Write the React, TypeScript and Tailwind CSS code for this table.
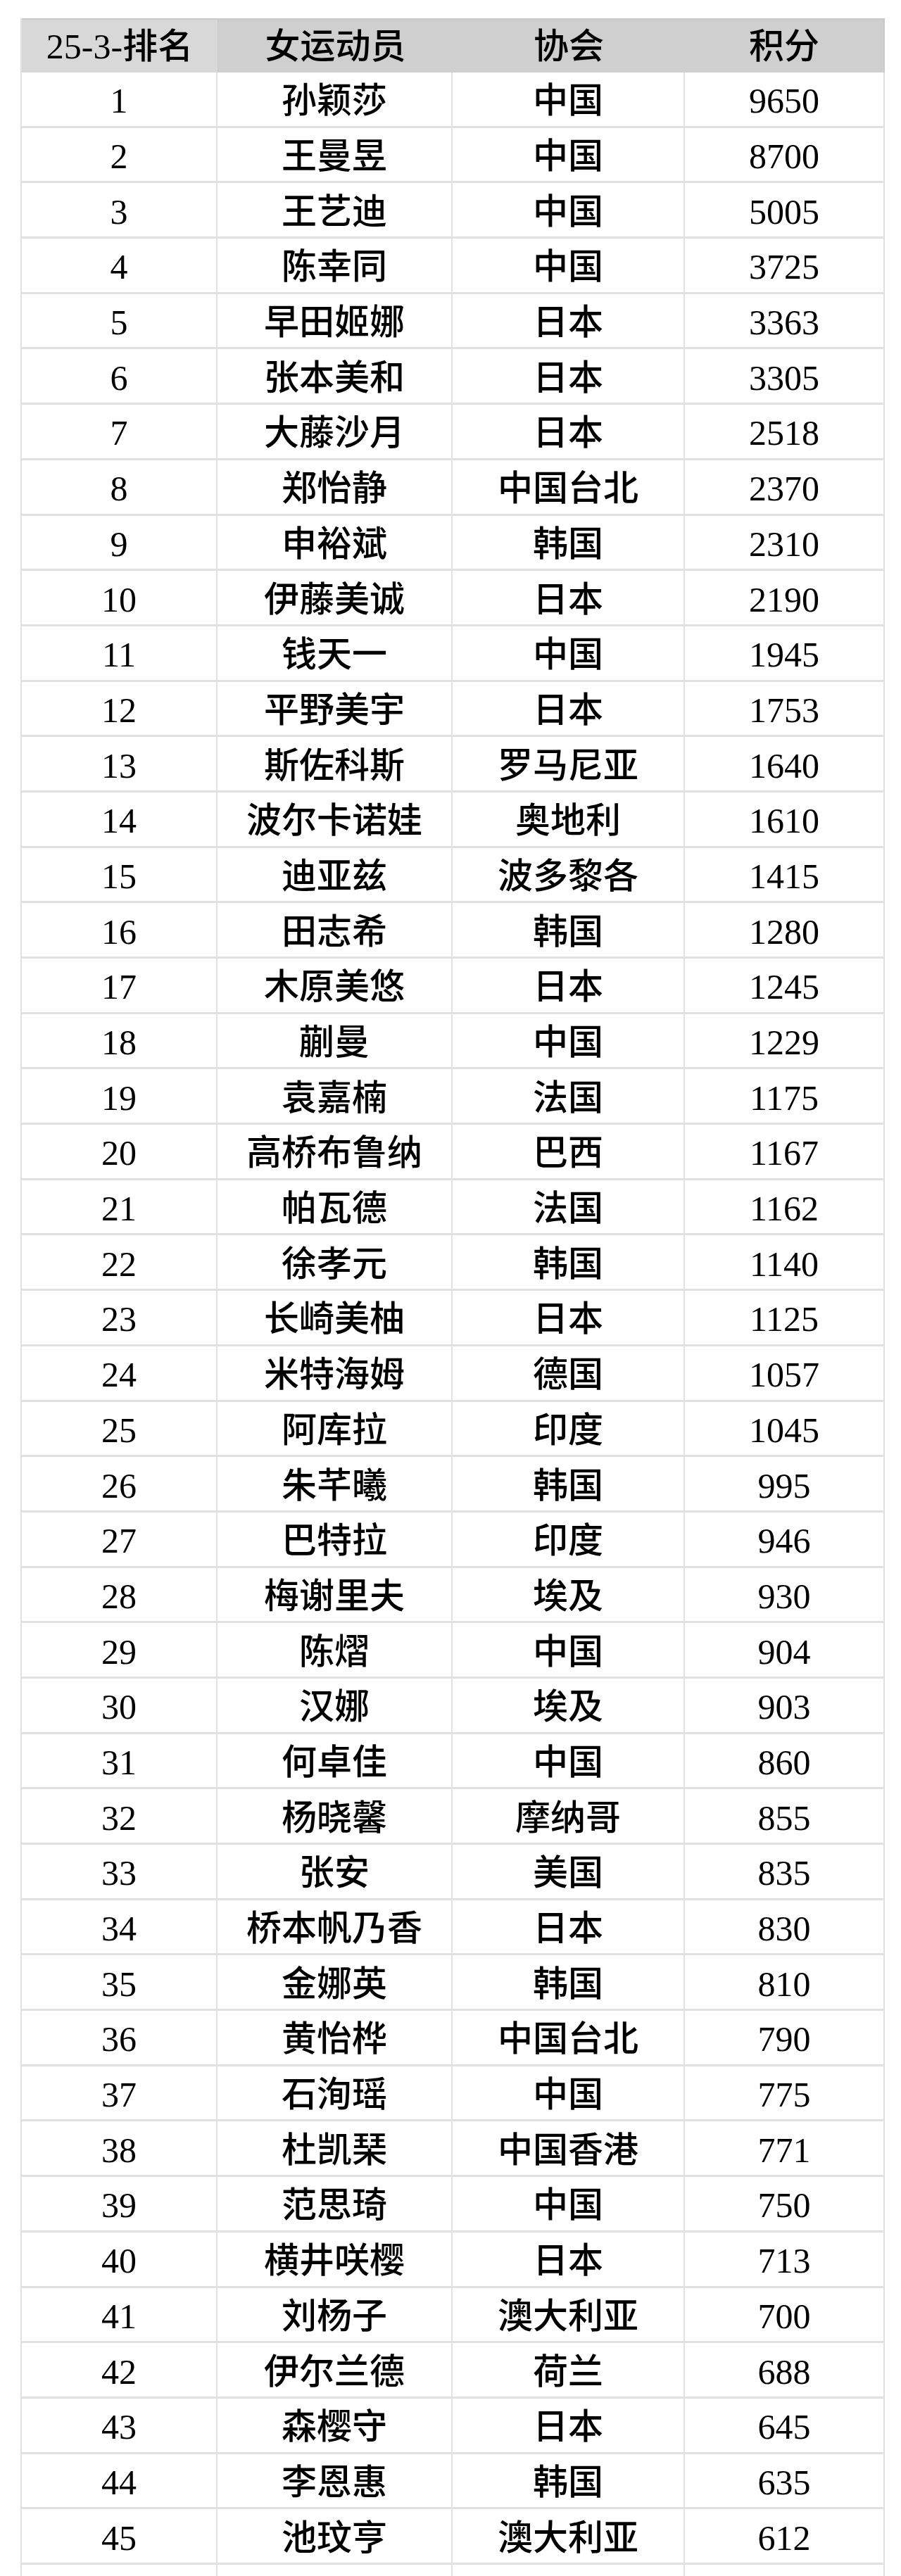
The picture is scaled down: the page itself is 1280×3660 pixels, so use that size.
const rows: [string, string, string][] = [
  ["孙颖莎", "中国", "9650"],
  ["王曼昱", "中国", "8700"],
  ["王艺迪", "中国", "5005"],
  ["陈幸同", "中国", "3725"],
  ["早田姬娜", "日本", "3363"],
  ["张本美和", "日本", "3305"],
  ["大藤沙月", "日本", "2518"],
  ["郑怡静", "中国台北", "2370"],
  ["申裕斌", "韩国", "2310"],
  ["伊藤美诚", "日本", "2190"],
  ["钱天一", "中国", "1945"],
  ["平野美宇", "日本", "1753"],
  ["斯佐科斯", "罗马尼亚", "1640"],
  ["波尔卡诺娃", "奥地利", "1610"],
  ["迪亚兹", "波多黎各", "1415"],
  ["田志希", "韩国", "1280"],
  ["木原美悠", "日本", "1245"],
  ["蒯曼", "中国", "1229"],
  ["袁嘉楠", "法国", "1175"],
  ["高桥布鲁纳", "巴西", "1167"],
  ["帕瓦德", "法国", "1162"],
  ["徐孝元", "韩国", "1140"],
  ["长崎美柚", "日本", "1125"],
  ["米特海姆", "德国", "1057"],
  ["阿库拉", "印度", "1045"],
  ["朱芊曦", "韩国", "995"],
  ["巴特拉", "印度", "946"],
  ["梅谢里夫", "埃及", "930"],
  ["陈熠", "中国", "904"],
  ["汉娜", "埃及", "903"],
  ["何卓佳", "中国", "860"],
  ["杨晓馨", "摩纳哥", "855"],
  ["张安", "美国", "835"],
  ["桥本帆乃香", "日本", "830"],
  ["金娜英", "韩国", "810"],
  ["黄怡桦", "中国台北", "790"],
  ["石洵瑶", "中国", "775"],
  ["杜凯琹", "中国香港", "771"],
  ["范思琦", "中国", "750"],
  ["横井咲樱", "日本", "713"],
  ["刘杨子", "澳大利亚", "700"],
  ["伊尔兰德", "荷兰", "688"],
  ["森樱守", "日本", "645"],
  ["李恩惠", "韩国", "635"],
  ["池玟亨", "澳大利亚", "612"],
];

const cell =
  "flex h-[78.7px] items-center justify-center border-r-2 border-b-[3px] border-[#e1e1e1] pt-[5px]";

export default function App() {
  return (
    <div
      className="h-[3660px] overflow-hidden bg-white pt-[26px] pl-[29px] text-[50px] leading-none font-medium text-black"
      style={{ fontFamily: '"Liberation Serif", "Noto Sans CJK SC", serif' }}
    >
      <div className="grid w-[1226px] grid-cols-[278px_334px_330px_284px] border-l-2 border-[#e1e1e1]">
        {/* header */}
        <div className="flex h-[77px] items-center justify-center border-t-2 border-[#c9c9c9] bg-[#d8d8d8]">
          25-3-排名
        </div>
        <div className="flex h-[77px] items-center justify-center border-t-2 border-l border-[#c9c9c9] bg-[#cfcfcf]">
          女运动员
        </div>
        <div className="flex h-[77px] items-center justify-center border-t-2 border-[#c9c9c9] bg-[#cfcfcf]">
          协会
        </div>
        <div className="flex h-[77px] items-center justify-center border-t-2 border-r-2 border-[#c9c9c9] bg-[#cfcfcf]">
          积分
        </div>

        {rows.map(([name, assoc, pts], i) => (
          <div key={i} className="contents">
            <div className={cell}>{i + 1}</div>
            <div className={cell}>{name}</div>
            <div className={cell}>{assoc}</div>
            <div className={cell}>{pts}</div>
          </div>
        ))}

        {/* next row, cut off by the page bottom */}
        <div className={cell}></div>
        <div className={cell}></div>
        <div className={cell}></div>
        <div className={cell}></div>
      </div>
    </div>
  );
}
